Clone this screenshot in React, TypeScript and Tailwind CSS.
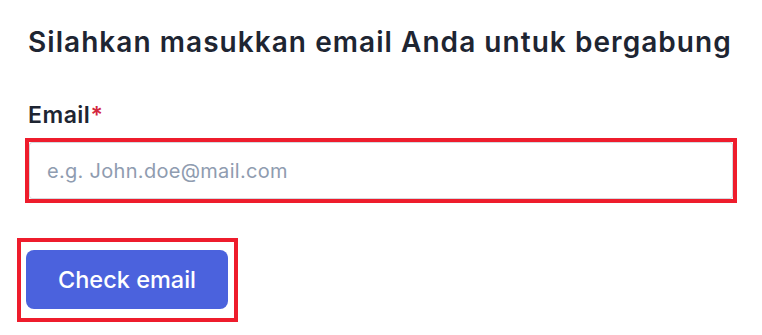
export default function App() {
  return (
    <main className="min-h-screen bg-white font-['Inter','Liberation_Sans',sans-serif] text-[#1e2532]">
      <div className="pl-[25px] pr-[25px] pt-[24px]">
        {/* Title */}
        <h1 className="pl-[3px] text-[28px] font-semibold leading-[36px] tracking-[1.05px] whitespace-nowrap">
          Silahkan masukkan email Anda untuk bergabung
        </h1>

        {/* Email field */}
        <label className="mt-[41px] block pl-[3px] text-[23px] font-semibold leading-[28px] tracking-[0.5px]">
          Email<span className="text-[#d3273d]">*</span>
        </label>
        <div className="mt-[9px] w-[712px] border-[4px] border-[#ee1c2c]">
          <input
            type="email"
            placeholder="e.g. John.doe@mail.com"
            className="block h-[57px] w-full rounded-[3px] border border-[#d4d8de] bg-white px-[17px] text-[20px] tracking-[0.3px] text-[#1e2532] outline-none placeholder:text-[#8f9cb0]"
          />
        </div>

        {/* Submit */}
        <div className="mt-[35px] ml-[-8px] inline-block border-[4.5px] border-[#ee1c2c] pt-[8px] pr-[6px] pb-[9px] pl-[5px]">
          <button className="flex h-[59px] w-[202px] items-center justify-center rounded-[8px] bg-[#4b62dd] text-[23.5px] font-medium text-white">
            Check email
          </button>
        </div>
      </div>
    </main>
  );
}
